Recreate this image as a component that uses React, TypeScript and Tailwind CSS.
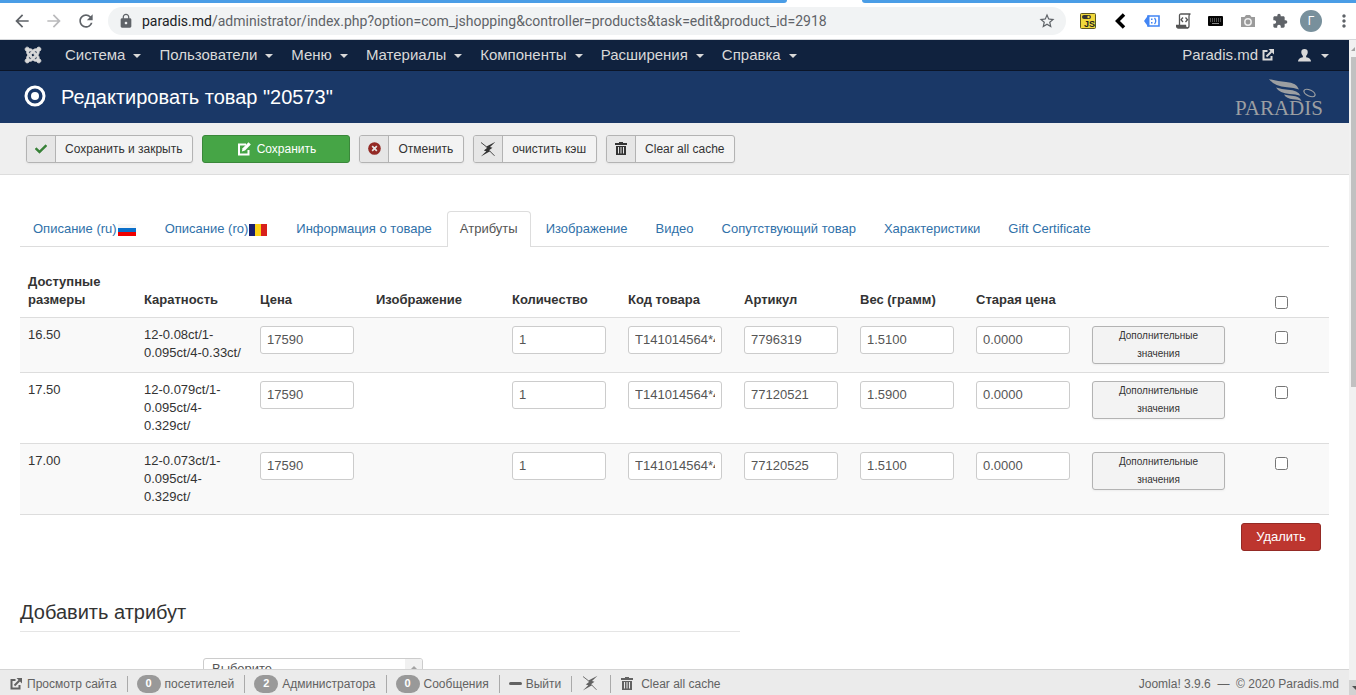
import React from "react";
import { FaJoomla, FaCheck } from "react-icons/fa";
import { MdArrowBack, MdArrowForward, MdExtension, MdRefresh, MdLock, MdStarBorder, MdMoreVert } from "react-icons/md";

const menu = ["Система", "Пользователи", "Меню", "Материалы", "Компоненты", "Расширения", "Справка"];

const headers = ["Каратность", "Цена", "Изображение", "Количество", "Код товара", "Артикул", "Вес (грамм)", "Старая цена"];

const rows = [
  { size: "16.50", carat: "12-0.08ct/1-0.095ct/4-0.33ct/", price: "17590", qty: "1", code: "T141014564*4", sku: "7796319", weight: "1.5100", old: "0.0000" },
  { size: "17.50", carat: "12-0.079ct/1-0.095ct/4-0.329ct/", price: "17590", qty: "1", code: "T141014564*4", sku: "77120521", weight: "1.5900", old: "0.0000" },
  { size: "17.00", carat: "12-0.073ct/1-0.095ct/4-0.329ct/", price: "17590", qty: "1", code: "T141014564*4", sku: "77120525", weight: "1.5100", old: "0.0000" },
];

function Caret() {
  return <span className="mt-0.5 h-0 w-0 border-x-4 border-t-4 border-x-transparent border-t-current" />;
}

function ExternalIcon({ className = "" }: { className?: string }) {
  return (
    <svg viewBox="0 0 12 12" className={`size-3 shrink-0 ${className}`} fill="none" stroke="currentColor" strokeWidth="2" aria-hidden="true">
      <path d="M5.500 2H1.500v8.500h8V7" />
      <path d="M4.500 7.500L9.500 2.500" />
      <path d="M6.500 0H12v5.500z" fill="currentColor" stroke="none" />
    </svg>
  );
}

function EditIcon() {
  return (
    <svg viewBox="0 0 14 14" className="size-[14px] shrink-0" aria-hidden="true">
      <path d="M9 2.500H2v10h9.500V8" fill="none" stroke="currentColor" strokeWidth="2" />
      <path d="M11.500.2l2.300 2.300L8 8.500l-3.200.9.800-3.200z" fill="currentColor" />
    </svg>
  );
}

function CancelIcon() {
  return (
    <svg viewBox="0 0 14 14" className="size-[13px]" aria-hidden="true">
      <circle cx="7" cy="7" r="6.800" fill="#942a25" />
      <path d="M4.500 4.500l5 5M9.500 4.500l-5 5" stroke="#e6e6e6" strokeWidth="1.800" />
    </svg>
  );
}

function BoltIcon() {
  return (
    <svg viewBox="0 0 16 16" className="size-4" fill="currentColor" aria-hidden="true">
      <path d="M15.500.8L10 6l2.500.8-3.500 2.500 1.500.8L.8 15.500l5.500-5.200-2.500-.8 3.500-2.700-1.800-.8z" />
      <path d="M1 1.500l5.500 4.300M9.500 9.800l5 5" stroke="currentColor" strokeWidth=".9" />
    </svg>
  );
}

function TrashIcon() {
  return (
    <svg viewBox="0 0 12 13" className="h-[13px] w-3" fill="currentColor" aria-hidden="true">
      <path d="M4 0h4v1h4v2H0V1h4z" />
      <path fillRule="evenodd" d="M1 4h10v9H1zM3 5v6.500h1V5zM5.500 5v6.500h1V5zM8 5v6.500h1V5z" />
    </svg>
  );
}

function RussianFlag() {
  return (
    <svg viewBox="0 0 18 12" className="mx-px mt-0.5 h-3 w-[18px]" aria-hidden="true">
      <path d="M0 0h18v4H0z" fill="#f6f6f6" />
      <path d="M0 4h18v4H0z" fill="#0b6fc9" />
      <path d="M0 8h18v4H0z" fill="#f00000" />
    </svg>
  );
}

function RomanianFlag() {
  return (
    <svg viewBox="0 0 18 12" className="mx-px mt-0.5 h-3 w-[18px]" aria-hidden="true">
      <path d="M0 0h6v12H0z" fill="#1a1f6e" />
      <path d="M6 0h6v12H6z" fill="#fcd116" />
      <path d="M12 0h6v12h-6z" fill="#d8201c" />
    </svg>
  );
}

function BrowserBar() {
  return (
    <div className="shrink-0 bg-white">
      <div className="flex h-[3px]">
        <div className="w-[787px] rounded-br-md bg-[#4a9de6]" />
        <div className="w-[75px]" />
        <div className="flex-1 rounded-bl-md bg-[#4a9de6]" />
      </div>
      <div className="flex h-[37px] items-center border-b border-[#d5d7da] pl-3 text-[#5f6368]">
        <button aria-label="Назад" className="mr-3"><MdArrowBack className="size-5" /></button>
        <button aria-label="Вперёд" className="mr-3 text-[#bababc]"><MdArrowForward className="size-5" /></button>
        <button aria-label="Обновить" className="mr-3"><MdRefresh className="size-5" /></button>
        <div className="flex h-7 min-w-0 flex-1 items-center rounded-full bg-[#f1f3f4] px-2.5">
          <MdLock className="mr-2 size-4 shrink-0" />
          <span className="flex-1 truncate font-[Roboto,sans-serif] text-sm">
            <span className="text-[#202124]">paradis.md</span>/administrator/index.php?option=com_jshopping&amp;controller=products&amp;task=edit&amp;product_id=2918
          </span>
          <MdStarBorder className="size-[18px] shrink-0" />
        </div>
        <div className="ml-3.5 flex items-center gap-4">
          <svg viewBox="0 0 16 16" className="size-4" aria-hidden="true">
            <rect x=".5" y=".5" width="15" height="15" rx="1" fill="#f0d83c" stroke="#5f5820" />
            <rect x="2" y="2" width="9" height="4" rx="2" fill="#333" />
            <circle cx="8.500" cy="4" r="1.200" fill="#f0d83c" />
            <text x="4" y="14" fontSize="9" fontWeight="700" fontFamily="Liberation Sans, sans-serif" fill="#222">JS</text>
          </svg>
          <svg viewBox="0 0 16 16" className="size-4" fill="none" stroke="#000" strokeWidth="3.500" aria-hidden="true">
            <path d="M12 1.500L5.500 8l6.500 6.500" />
          </svg>
          <svg viewBox="0 0 16 16" className="size-4" fill="none" aria-hidden="true">
            <path d="M4 3h11v10H4z" fill="#fff" stroke="#4285f4" strokeWidth="1.600" />
            <path d="M0 8l4-5.500h1.500v11H4z" fill="#4285f4" />
            <path d="M7 5.500h1.500V7H7zM7 9h1.500v1.500H7z" fill="#4285f4" />
            <path d="M10.500 5q2.500 3 0 6" stroke="#4285f4" strokeWidth="1.300" />
          </svg>
          <svg viewBox="0 0 16 16" className="size-4" fill="none" stroke="#555" strokeWidth="1.300" aria-hidden="true">
            <path d="M3.500 12V2.500Q3.500 1 5 1h9.500Q13 1 13 3v10q0 2-2 2" />
            <path d="M.5 12.500h9q0 2.500 2 2.500H2.500Q.5 15 .5 12.500z" fill="#555" />
            <path d="M7 4.500L5 6.700 7 9M9.500 4.500l2 2.200-2 2.300" />
          </svg>
          <svg viewBox="0 0 16 12" className="h-3 w-4" aria-hidden="true">
            <rect x="0" y="1" width="15" height="10" rx="1" fill="#050505" />
            <path d="M2 4h11M2 6h11" stroke="#999" strokeWidth="1" strokeDasharray="1 1" />
            <path d="M4 8.500h7" stroke="#888" />
          </svg>
          <svg viewBox="0 0 16 14" className="h-3.5 w-4" aria-hidden="true">
            <path d="M1 3h3.500L6 1h4l1.500 2H15v10H1z" fill="#9b9b9b" />
            <circle cx="8" cy="8" r="3.200" fill="none" stroke="#eee" strokeWidth="1.500" />
          </svg>
          <MdExtension className="size-4" />
        </div>
        <span className="ml-3 flex size-[22px] items-center justify-center rounded-full bg-[#78909c] font-['Liberation_Sans',sans-serif] text-xs text-white">Г</span>
        <button aria-label="Меню браузера" className="ml-3 w-[22px]"><MdMoreVert className="size-5" /></button>
      </div>
    </div>
  );
}

function Logo() {
  return (
    <svg viewBox="0 0 94 42" className="h-[42px] w-[94px]" fill="#9c9fa2" role="img" aria-label="Paradis">
      <text x="1" y="39" fontSize="21" fontFamily="Liberation Serif, serif">PARADIS</text>
      <path d="M35 3q9 2.500 17 3 11 .5 13 7.500-5-2-12-2.300Q40 10.500 35 3z" />
      <path d="M42 11.500q6 1.800 12 2.200 10 .5 12.500 6-5-1.500-11-1.800-10-.5-13.500-6.400z" />
      <path d="M50 18.500q4 1 8 1.300 7.500.5 9.500 5.200-4-1.500-8.500-1.700-6.500-.5-9-4.800z" />
      <ellipse cx="75.500" cy="17" rx="6" ry="3" fill="none" stroke="#9c9fa2" strokeWidth="1.300" transform="rotate(25 75.500 17)" />
    </svg>
  );
}

function ToolButton({ icon, children }: { icon: React.ReactNode; children: React.ReactNode }) {
  return (
    <button className="flex h-7 items-stretch overflow-hidden rounded-[3px] border border-[#b3b3b3] bg-[#f3f3f3] text-xs text-[#333] shadow-xs">
      <span className="flex w-[29px] items-center justify-center border-r border-[#b3b3b3] bg-[#e6e6e6]">{icon}</span>
      <span className="flex flex-1 items-center justify-center pr-2.5 pl-[9px]">{children}</span>
    </button>
  );
}

function TextBox({ label, value }: { label: string; value: string }) {
  return (
    <input
      aria-label={label}
      defaultValue={value}
      className="block h-7 w-[94px] rounded-[3px] border border-[#ccc] bg-white px-1.5 pb-0.5 text-[13px] text-[#555]"
    />
  );
}

function Check({ label }: { label: string }) {
  return <input type="checkbox" aria-label={label} className="mx-auto mt-[5px] block size-[13px]" />;
}

function Tab({ children, active = false }: { children: React.ReactNode; active?: boolean }) {
  return (
    <a
      href="#"
      className={
        active
          ? "-mb-px mr-0.5 flex h-9 items-center rounded-t border border-b-0 border-[#ddd] bg-white px-3 pb-0.5 text-[#555]"
          : "mr-0.5 flex h-[35px] items-center px-[13px] text-[#3071a9]"
      }
    >
      {children}
    </a>
  );
}

function StatusBar() {
  const badge = "mr-1 flex h-[18px] w-6 items-center justify-center rounded-full bg-[#999] text-[11px] font-bold text-white";
  const item = "flex items-center border-r border-[#aaa] pr-2.5 pl-[9px]";
  return (
    <footer className="flex h-[26px] shrink-0 items-center border-t border-[#d4d4d4] bg-[#ebebeb] pt-0.5 pr-2.5 pl-px text-xs text-[#626262]">
      <a href="#" className={item}><ExternalIcon className="mr-[5px]" />Просмотр сайта</a>
      <span className={item}><span className={badge}>0</span>посетителей</span>
      <span className={item}><span className={badge}>2</span>Администратора</span>
      <span className={item}><span className={badge}>0</span>Сообщения</span>
      <a href="#" className={item}><span className="mr-1 h-[3px] w-[13px] rounded-xs bg-current" />Выйти</a>
      <a href="#" aria-label="Очистить кэш" className="flex h-[18px] items-start border-r border-[#aaa] pr-3 pl-2.5"><BoltIcon /></a>
      <a href="#" className="flex items-center gap-2 px-2.5"><TrashIcon />Clear all cache</a>
      <span className="ml-auto">Joomla! 3.9.6 &nbsp;—&nbsp; © 2020 Paradis.md</span>
    </footer>
  );
}

export default function App() {
  return (
    <div className="flex h-screen flex-col overflow-hidden bg-white font-['Liberation_Sans',Arial,sans-serif] text-[13px] leading-[18px] text-[#333]">
      <BrowserBar />
      <div className="flex min-h-0 flex-1">
        <div className="flex min-w-0 flex-1 flex-col">
          <nav className="flex h-[31px] shrink-0 items-center border-b border-[#0b1528] bg-[#10223e] pr-5 pl-6 text-[15px] text-[#d9d9d9]">
            <a href="#" aria-label="Joomla" className="mr-[23px]"><FaJoomla className="size-[18px] stroke-current stroke-[24]" /></a>
            <div className="flex flex-1 gap-[18px]">
              {menu.map((m) => (
                <a key={m} href="#" className="flex items-center gap-2">{m}<Caret /></a>
              ))}
            </div>
            <a href="#" className="mr-6 flex items-center gap-1">Paradis.md<ExternalIcon /></a>
            <a href="#" aria-label="Профиль" className="flex items-center gap-2.5">
              <svg viewBox="0 0 12 12" className="size-[13px]" fill="currentColor" aria-hidden="true">
                <path d="M6 0q3 0 3 3 0 2-1.500 3.500v1.200Q12 8.500 12 11.500H0Q0 8.500 4.500 7.700V6.500Q3 5 3 3q0-3 3-3z" />
              </svg>
              <Caret />
            </a>
          </nav>
          <header className="flex h-[52px] shrink-0 items-center justify-between bg-[#1a3867] pr-[21px] pl-6 text-white">
            <h1 className="flex items-center gap-[15px] text-xl">
              <svg viewBox="0 0 22 22" className="mb-0.5 size-[22px]" fill="none" aria-hidden="true">
                <circle cx="11" cy="11" r="9" stroke="#fff" strokeWidth="3" />
                <circle cx="11" cy="11" r="4" fill="#fff" />
              </svg>
              Редактировать товар "20573"
            </h1>
            <Logo />
          </header>
          <div className="flex h-[52px] shrink-0 items-center gap-[9px] border-b border-[#ddd] bg-[#efefef] pl-[26px]">
            <ToolButton icon={<FaCheck className="size-3 text-[#378137]" />}>Сохранить и закрыть</ToolButton>
            <button className="flex h-7 w-[148px] items-center justify-center gap-1.5 rounded-[3px] border border-[#3a873a] bg-[#46a546] text-xs text-white">
              <EditIcon />Сохранить
            </button>
            <ToolButton icon={<CancelIcon />}>Отменить</ToolButton>
            <ToolButton icon={<BoltIcon />}>очистить кэш</ToolButton>
            <ToolButton icon={<TrashIcon />}>Clear all cache</ToolButton>
          </div>
          <main className="min-h-0 flex-1 overflow-hidden px-5 pt-9">
            <div className="flex border-b border-[#ddd]">
              <Tab>Описание (ru)<RussianFlag /></Tab>
              <Tab>Описание (ro)<RomanianFlag /></Tab>
              <Tab>Информация о товаре</Tab>
              <Tab active>Атрибуты</Tab>
              <Tab>Изображение</Tab>
              <Tab>Видео</Tab>
              <Tab>Сопутствующий товар</Tab>
              <Tab>Характеристики</Tab>
              <Tab>Gift Certificate</Tab>
            </div>
            <table className="mt-[18px] w-full table-fixed border-collapse">
              <colgroup>
                <col className="w-[116px]" />
                <col className="w-[116px]" />
                <col className="w-[116px]" />
                <col className="w-[136px]" />
                <col className="w-[116px]" />
                <col className="w-[116px]" />
                <col className="w-[116px]" />
                <col className="w-[116px]" />
                <col className="w-[116px]" />
                <col className="w-[149px]" />
                <col />
              </colgroup>
              <thead>
                <tr className="text-left align-bottom">
                  <th className="p-2">Доступные размеры</th>
                  {headers.map((h) => <th key={h} className="p-2">{h}</th>)}
                  <th />
                  <th className="p-2"><Check label="Выбрать все" /></th>
                </tr>
              </thead>
              <tbody>
                {rows.map((r) => (
                  <tr key={r.size} className="border-y border-[#ddd] align-top odd:bg-[#f9f9f9]">
                    <td className="p-2">{r.size}</td>
                    <td className="p-2">{r.carat}</td>
                    <td className="p-2"><TextBox label="Цена" value={r.price} /></td>
                    <td />
                    <td className="p-2"><TextBox label="Количество" value={r.qty} /></td>
                    <td className="p-2"><TextBox label="Код товара" value={r.code} /></td>
                    <td className="p-2"><TextBox label="Артикул" value={r.sku} /></td>
                    <td className="p-2"><TextBox label="Вес (грамм)" value={r.weight} /></td>
                    <td className="p-2"><TextBox label="Старая цена" value={r.old} /></td>
                    <td className="p-2">
                      <button className="block w-full rounded-[3px] border border-[#b3b3b3] bg-[#f3f3f3] px-5 text-[10px] leading-[18px] shadow-xs">
                        Дополнительные значения
                      </button>
                    </td>
                    <td className="p-2"><Check label={`Выбрать ${r.size}`} /></td>
                  </tr>
                ))}
              </tbody>
            </table>
            <div className="flex justify-end p-2">
              <button className="h-7 w-20 rounded-[3px] border border-[#942a25] bg-[#bd362f] text-white">Удалить</button>
            </div>
            <section className="mt-10 w-[720px]">
              <h2 className="border-b border-[#e5e5e5] pb-1.5 text-xl leading-[26px]">Добавить атрибут</h2>
              <div className="mt-[26px] ml-[183px] flex h-[72px] w-[220px] overflow-hidden rounded-[3px] border border-[#ccc]">
                <select multiple aria-label="Атрибут" className="min-w-0 flex-1 overflow-hidden px-2 pt-0.5 text-[#555]">
                  <option>Выберите</option>
                </select>
                <div className="flex w-[17px] justify-center bg-[#f1f1f1] pt-[7px]">
                  <span className="h-0 w-0 border-x-4 border-b-4 border-x-transparent border-b-[#a3a3a3]" />
                </div>
              </div>
            </section>
          </main>
          <StatusBar />
        </div>
        <div className="flex w-[7px] shrink-0 flex-col items-end overflow-hidden bg-[#f1f1f1]">
          <div className="flex h-[17px] w-[5px] items-center overflow-hidden">
            <span className="h-0 w-0 shrink-0 border-b-4 border-l-4 border-b-[#a3a3a3] border-l-transparent" />
          </div>
          <div className="h-[330px] w-[5px] bg-[#c1c1c1]" />
          <div className="mt-auto flex h-[15px] w-full items-center justify-end bg-[#d2d2d2]">
            <span className="h-0 w-0 border-t-4 border-l-4 border-t-[#505050] border-l-transparent" />
          </div>
        </div>
      </div>
    </div>
  );
}
